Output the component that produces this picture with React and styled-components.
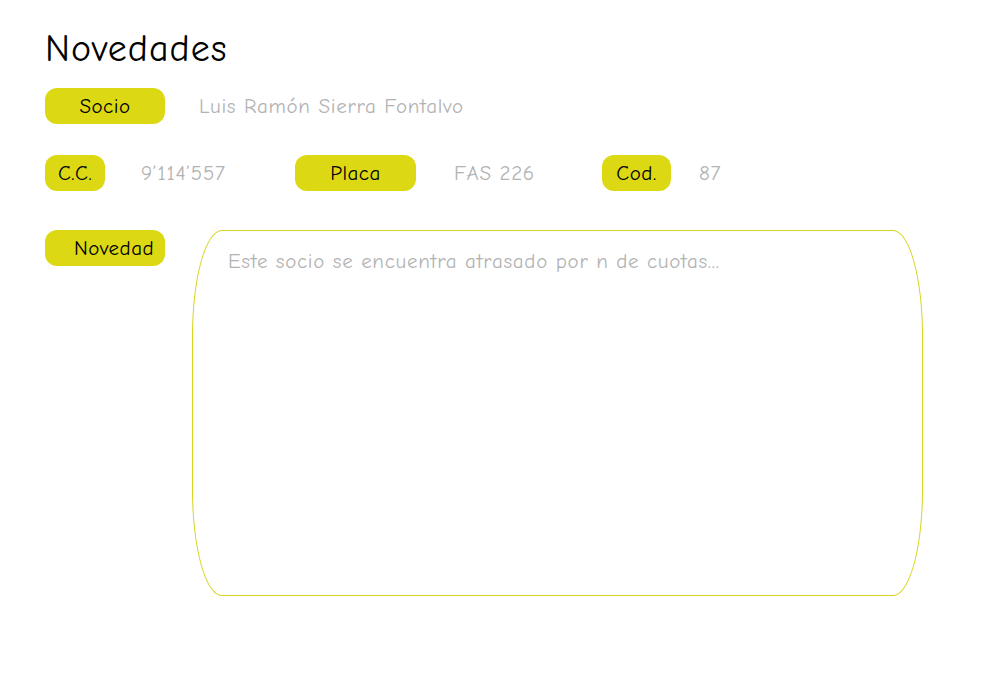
import React from 'react';
import styled, { createGlobalStyle } from 'styled-components';

const GlobalStyle = createGlobalStyle`
  body {
    margin: 0;
    background: #ffffff;
    font-family: "Comic Sans MS", "Comic Neue", "DejaVu Sans", sans-serif;
  }
`;

const Page = styled.div`
  padding: 25px 45px 0;
`;

const Title = styled.h1`
  margin: 0 0 15px;
  font-size: 38px;
  font-weight: normal;
  letter-spacing: 1px;
  line-height: 48px;
  color: #000;
`;

// Fila de campos
const Row = styled.div`
  display: flex;
  align-items: ${p => p.$align || 'center'};
  margin-bottom: ${p => p.$mb || 0}px;
`;

const Field = styled.div`
  display: flex;
  align-items: center;
  width: ${p => (p.$width ? `${p.$width}px` : 'auto')};
  flex-shrink: 0;
`;

// Etiqueta amarilla
const Pill = styled.div`
  display: flex;
  align-items: center;
  justify-content: ${p => (p.$left ? 'flex-start' : 'center')};
  box-sizing: border-box;
  width: ${p => p.$width}px;
  height: 36px;
  padding-left: ${p => p.$pl || 0}px;
  border-radius: 12px;
  background: #dcd914;
  color: #000;
  font-size: 21px;
  letter-spacing: 0.5px;
  flex-shrink: 0;
`;

const Value = styled.span`
  margin-left: ${p => p.$gap}px;
  font-size: 21px;
  letter-spacing: 0.7px;
  color: #b3b3b3;
  white-space: nowrap;
`;

const NoteArea = styled.textarea`
  box-sizing: border-box;
  width: 731px;
  height: 366px;
  margin-left: 27px;
  padding: 18px 35px;
  border: 1px solid #d6d41c;
  border-radius: 30px / 106px;
  outline: none;
  resize: none;
  font-family: inherit;
  font-size: 21px;
  letter-spacing: 0.7px;
  color: #555;
  background: #fff;

  &::placeholder {
    color: #b3b3b3;
  }
`;

export default function App() {
  return (
    <>
      <GlobalStyle />
      <Page>
        <Title>Novedades</Title>

        <Row $mb={31}>
          <Pill $width={120}>Socio</Pill>
          <Value $gap={34}>Luis Ramón Sierra Fontalvo</Value>
        </Row>

        <Row $mb={39}>
          <Field $width={250}>
            <Pill $width={60}>C.C.</Pill>
            <Value $gap={36}>9’114’557</Value>
          </Field>
          <Field $width={307}>
            <Pill $width={121}>Placa</Pill>
            <Value $gap={38}>FAS 226</Value>
          </Field>
          <Field>
            <Pill $width={69}>Cod.</Pill>
            <Value $gap={28}>87</Value>
          </Field>
        </Row>

        <Row $align="flex-start">
          <Pill $width={120} $left $pl={29}>Novedad</Pill>
          <NoteArea placeholder="Este socio se encuentra atrasado por n de cuotas..." />
        </Row>
      </Page>
    </>
  );
}
